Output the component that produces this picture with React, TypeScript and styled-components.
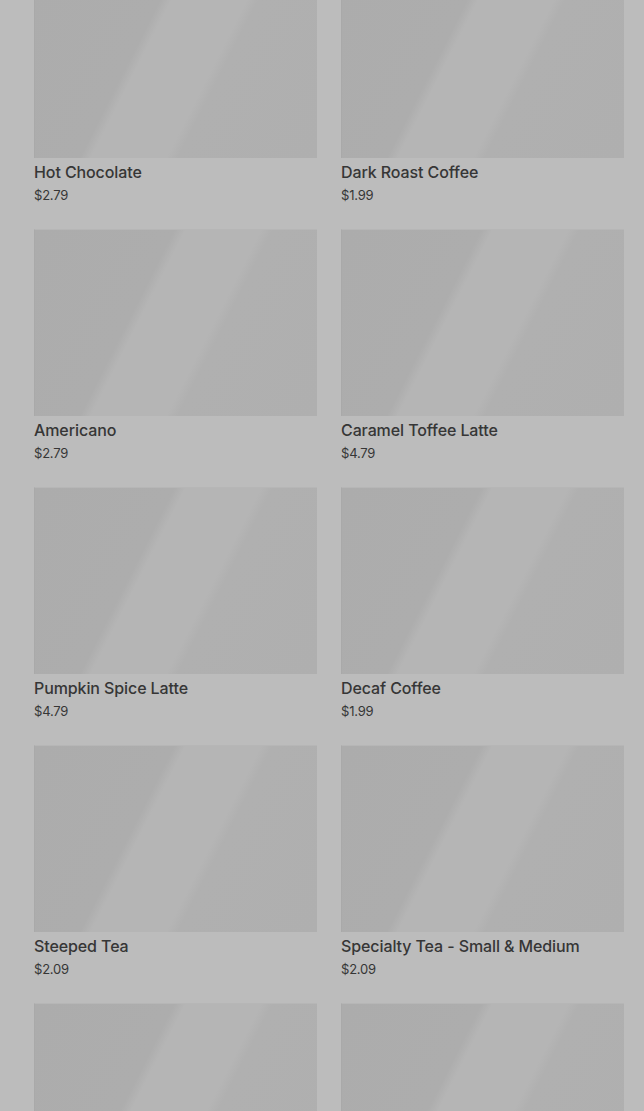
import React from 'react';
import styled, {createGlobalStyle} from 'styled-components';

type ItemType = {
    name?: string
    price?: string
}

// last two are still loading, only the picture placeholder is there
const items: ItemType[] = [
    {name: 'Hot Chocolate', price: '$2.79'},
    {name: 'Dark Roast Coffee', price: '$1.99'},
    {name: 'Americano', price: '$2.79'},
    {name: 'Caramel Toffee Latte', price: '$4.79'},
    {name: 'Pumpkin Spice Latte', price: '$4.79'},
    {name: 'Decaf Coffee', price: '$1.99'},
    {name: 'Steeped Tea', price: '$2.09'},
    {name: 'Specialty Tea - Small & Medium', price: '$2.09'},
    {},
    {},
]

const GlobalStyle = createGlobalStyle`
  html, body {
    margin: 0;
    padding: 0;
    background: #bcbcbc;
  }
  body {
    font-family: Inter, "Noto Sans", sans-serif;
    -webkit-font-smoothing: antialiased;
  }
`

export default function App() {
    return (
        <>
            <GlobalStyle/>
            <Page>
                <Grid>
                    {items.map((item, i) => (
                        <Card key={i}>
                            <Picture/>
                            {item.name && <Title>{item.name}</Title>}
                            {item.price && <Price>{item.price}</Price>}
                        </Card>
                    ))}
                </Grid>
            </Page>
        </>
    );
}

const Page = styled.div`
  height: 1111px;
  overflow: hidden;
`

// list is scrolled a bit, first row of pictures is cut at the top
const Grid = styled.div`
  display: grid;
  grid-template-columns: 1fr 1fr;
  column-gap: 24px;
  row-gap: 25px;
  padding: 0 20px 0 34px;
  margin-top: -29px;
`

const Card = styled.div`
  display: flex;
  flex-direction: column;
`

const Picture = styled.div`
  height: 187px;
  box-sizing: border-box;
  border-top: 1px solid #b6b6b6;
  border-left: 1px solid #a9a9a9;
  background: linear-gradient(117deg,
  #acacac 0%,
  #adadad 37%,
  #b5b5b5 40%,
  #b5b5b5 60%,
  #b0b0b0 63%,
  #afafaf 100%);
`

const Title = styled.div`
  margin-top: 4px;
  font-size: 16px;
  line-height: 20px;
  font-weight: 500;
  color: #363636;
  letter-spacing: -0.1px;
`

const Price = styled.div`
  margin-top: 4px;
  font-size: 13px;
  line-height: 18px;
  color: #363636;
  letter-spacing: -0.2px;
`
